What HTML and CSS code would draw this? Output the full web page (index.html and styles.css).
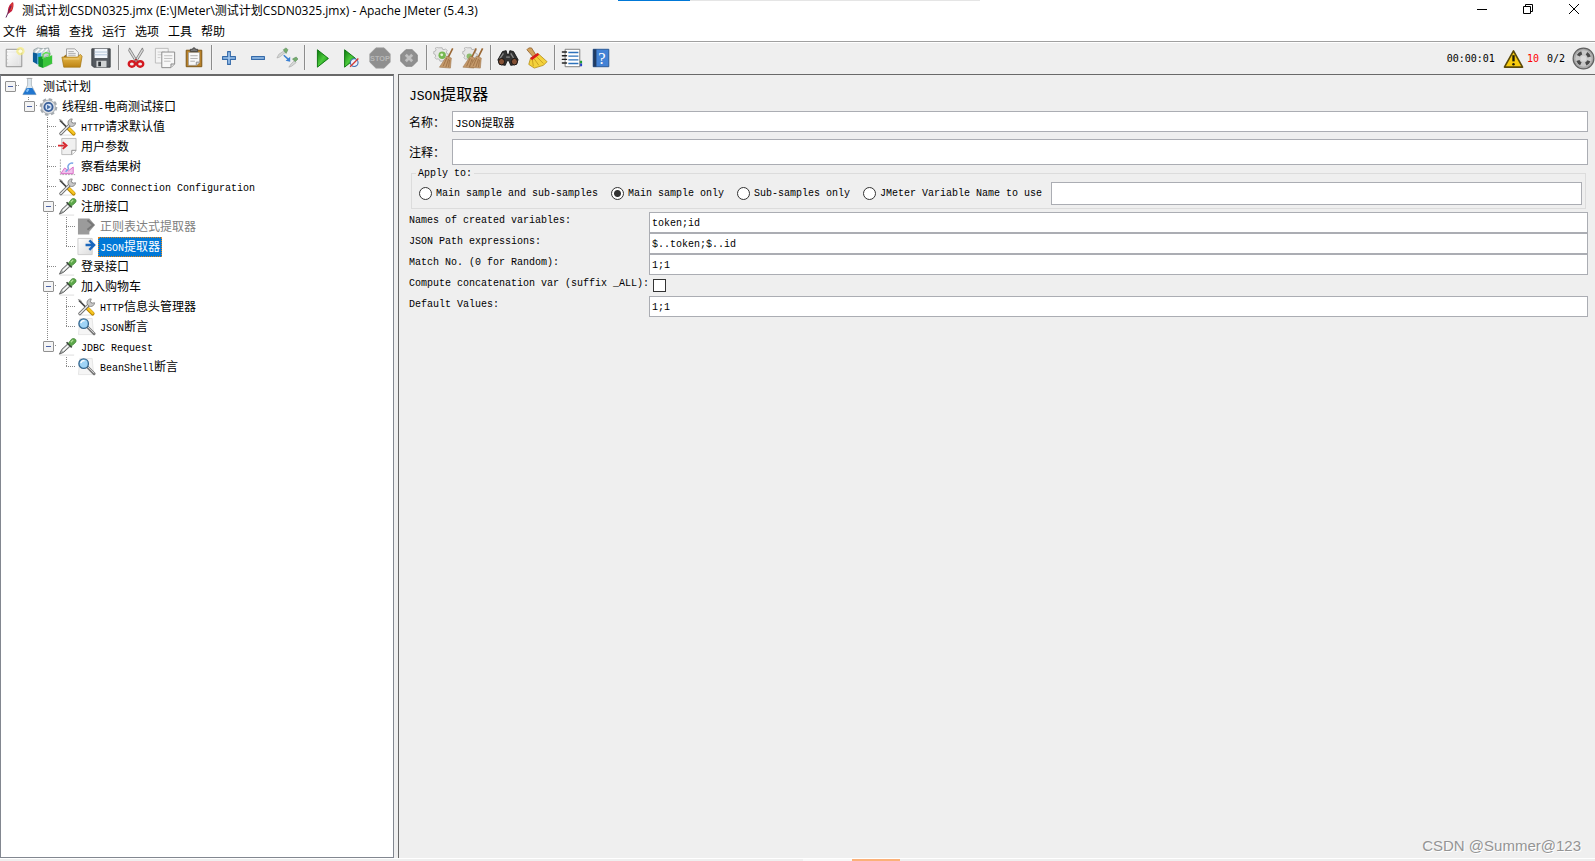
FILE: index.html
```html
<!DOCTYPE html>
<html lang="zh-CN">
<head>
<meta charset="utf-8">
<title>Apache JMeter (5.4.3)</title>
<link rel="stylesheet" href="styles.css">
</head>
<body>
<svg class="defs" aria-hidden="true">
  <defs>
    <linearGradient id="gGreen" x1="0" y1="0" x2="1" y2="1"><stop offset="0" stop-color="#0a7a0a"/><stop offset=".5" stop-color="#4cc93c"/><stop offset="1" stop-color="#0a8a0a"/></linearGradient>
    <linearGradient id="gFolder" x1="0" y1="0" x2="0" y2="1"><stop offset="0" stop-color="#eec356"/><stop offset="1" stop-color="#bd8312"/></linearGradient>
    <linearGradient id="gPaper" x1="0" y1="0" x2="1" y2="1"><stop offset="0" stop-color="#fff"/><stop offset="1" stop-color="#dcdcdc"/></linearGradient>
    <symbol id="tools" viewBox="0 0 20 20">
      <path d="M2 18.500h15" stroke="#ddd"/>
      <path d="M2 3l9 9" stroke="#444" stroke-width="1.600"/><path d="M1 2l3 1 1 2" stroke="#999" fill="none"/>
      <path d="M11.500 12l5 5" stroke="#b98600" stroke-width="4" stroke-linecap="round"/><path d="M11.500 11.500l5 5" stroke="#f7c624" stroke-width="2.500" stroke-linecap="round"/>
      <path d="M3 17L14 6" stroke="#555" stroke-width="3.200" stroke-linecap="round"/><path d="M3 17L14 6" stroke="#ddd" stroke-width="1.800" stroke-linecap="round"/>
      <path d="M15 1.500a4 4 0 1 0 3.500 4l-3 .5-1.500-1.500z" fill="#c9c9c9" stroke="#777" stroke-width=".8"/>
    </symbol>
    <symbol id="dropper" viewBox="0 0 20 20">
      <path d="M2 18.500h15" stroke="#ddd"/>
      <path d="M1.500 17.500L4 12.500l6.500-6 2.500 2.500-7 6.500z" fill="#b5bab8" stroke="#555" stroke-width=".9"/>
      <path d="M5 14l6-5.500" stroke="#fff" stroke-width="1.400"/>
      <path d="M9 5l5.500 5.500" stroke="#3c463c" stroke-width="1.800"/>
      <path d="M11 6l3-4c2-2 5.500-.5 5 2-.2 1.500-3 3.500-5 5z" fill="#5da84a" stroke="#367a2c" stroke-width=".7"/><path d="M13.500 5l2.500-2.500" stroke="#b3e09c" stroke-width="1.300"/>
    </symbol>
    <symbol id="lens" viewBox="0 0 20 20">
      <path d="M3 1h13l1.500 17H1.500z" fill="#f5f5f5" stroke="#ddd" stroke-width=".7"/>
      <path d="M11 10l7 7" stroke="#777" stroke-width="3" stroke-linecap="round"/><path d="M11.500 10l6.500 6.500" stroke="#ddd"/>
      <circle cx="7" cy="6.500" r="5" fill="#9fd4f6" stroke="#35678f" stroke-width="1.400"/><path d="M4 6a3.500 3.500 0 0 1 4-2.500" stroke="#fff" fill="none" stroke-width="1.300"/>
    </symbol>
    <symbol id="broom" viewBox="0 0 24 24">
      <path d="M21.500 1.500l-5 10" stroke="#9a6835" stroke-width="1.800"/>
      <path d="M15 10l5 2L19 23 7 22z" fill="#c59a6b" stroke="#9b7148" stroke-width=".6"/><path d="M15 12l-4 9M17 13l-3 9M18 14l-1 8" stroke="#8d6037" stroke-width=".7"/>
    </symbol>
    <symbol id="gearSmall" viewBox="0 0 24 24">
      <path d="M9 1h3l.5 2 2 .5 2-1 2 2-1 2 .5 2 2 .5v3l-2 .5-1 2 1 2-2 2-2-1-2 1h-3l-.5-2-2-1-2 .5-2-2 1-2-.5-2-2-1v-3l2-.5 1-2-1-2 2-1.500 2 1z" fill="#e6e6e6" stroke="#a9a9a9" stroke-width="1"/>
    </symbol>
  </defs>
</svg>

<div class="window">
  <div class="tabstrip"><span class="tab-active"></span><span class="tab-rest"></span></div>
  <header class="titlebar">
    <svg class="feather" viewBox="0 0 12 18"><path d="M10 1c1 2 .5 6-1 9l-4 3c-1-4 1-10 5-12z" fill="#c9203d"/><path d="M8 2c2 1 1 4 0 7" stroke="#e4572e" fill="none"/><path d="M8 5L3 16.500" stroke="#62265b"/></svg>
    <h1 class="window-title">测试计划CSDN0325.jmx (E:\JMeter\测试计划CSDN0325.jmx) - Apache JMeter (5.4.3)</h1>
    <div class="window-controls">
      <button aria-label="最小化"><svg viewBox="0 0 12 12"><path d="M1 6.500h10"/></svg></button>
      <button aria-label="还原"><svg viewBox="0 0 12 12"><path d="M1.500 3.500h7v7h-7zM3.500 3.500v-2h7v7h-2"/></svg></button>
      <button aria-label="关闭"><svg viewBox="0 0 12 12"><path d="M1 1l10 10M11 1L1 11"/></svg></button>
    </div>
  </header>
  <nav class="menubar">
    <button>文件</button><button>编辑</button><button>查找</button><button>运行</button><button>选项</button><button>工具</button><button>帮助</button>
  </nav>

  <div class="toolbar">
    <button aria-label="新建"><svg viewBox="0 0 24 24"><path d="M3.500 2.500h17v19h-17z" fill="url(#gPaper)" stroke="#8c8c8c"/><path d="M6 5.500h11v13" fill="none" stroke="#e9e9e9"/><path d="M5 5v14" stroke="#c9c9c9" stroke-dasharray="1 3"/><circle cx="19" cy="4.500" r="4.500" fill="#f8ec70" opacity=".65"/><circle cx="19" cy="4.500" r="2" fill="#fffde0"/></svg></button>
    <button aria-label="模板"><svg viewBox="0 0 24 24"><path d="M12 20l8-3 3 1-8 4z" fill="#bbb"/><path d="M2 7V3l4-2 6 1 6-1 2 7-8 4z" fill="#c9d3d6" stroke="#7f8b8f" stroke-width=".7"/><path d="M4 6l4-4M8 7l5-5M13 7l4-5" stroke="#fff" stroke-width="1.500"/><path d="M1 6l5 1v12l-5-3z" fill="#0a5c98"/><path d="M6 7l4-1v12l-4 1z" fill="#2ea1dc"/><path d="M7 11l5-1v13l-5-2z" fill="#139529"/><path d="M12 12l10-3v9l-10 5z" fill="#39c53a"/><path d="M12 13V8l3-2 4 1v4" fill="none" stroke="#5fdc50" stroke-width="1.500"/></svg></button>
    <button aria-label="打开"><svg viewBox="0 0 24 24"><path d="M3 10l3-2h13l2 2v10H3z" fill="#a16f13"/><path d="M6 2h9l4 4v8H6z" fill="#f5f5f5" stroke="#888" stroke-width=".8"/><path d="M8 5h6M8 7h8M8 9h8" stroke="#aaa"/><path d="M1 11h17l3-3 2 2-2 12H3z" fill="url(#gFolder)" stroke="#a67818" stroke-width=".8"/><path d="M3 13h17" stroke="#f4d587"/></svg></button>
    <button aria-label="保存"><svg viewBox="0 0 24 24"><path d="M2 2h20v20H4l-2-2z" fill="#555a60" stroke="#3a3e42"/><path d="M5 2h14v10H5z" fill="#f2f6fb"/><path d="M5 5.500h14M5 8.500h14" stroke="#acbfd4"/><path d="M7 15h11v7H7z" fill="#d0d3d4"/><path d="M9 16h3v5H9z" fill="#30353a"/></svg></button>
    <span class="sep"></span>
    <button aria-label="剪切"><svg viewBox="0 0 24 24"><path d="M5 1l9 15-2 1L4 4zM19 1l-9 15 2 1 8-13z" fill="#dadada" stroke="#777" stroke-width=".9"/><ellipse cx="7.500" cy="18.500" rx="3.400" ry="3" fill="none" stroke="#d31920" stroke-width="2.600"/><ellipse cx="16.500" cy="18.500" rx="3.400" ry="3" fill="none" stroke="#d31920" stroke-width="2.600"/><circle cx="12" cy="14" r="1" fill="#b11"/></svg></button>
    <button aria-label="复制"><svg viewBox="0 0 24 24"><path d="M1.500 1.500h14v16h-14z" fill="#f4f4f4" stroke="#b9b9b9"/><path d="M4 5.500h8M4 8.500h5M4 11.500h3" stroke="#ccc"/><path d="M8.500 5.500h14v13l-4 4h-10z" fill="#f7f7f7" stroke="#858585"/><path d="M11 9.500h9M11 12.500h9M11 15.500h7" stroke="#bbb"/><path d="M18.500 22v-3.500h4" fill="#ddd" stroke="#888"/></svg></button>
    <button aria-label="粘贴"><svg viewBox="0 0 24 24"><path d="M3.500 3.500h17v18h-17z" fill="#b88129" stroke="#76500f"/><path d="M6 6h12v11l-3 3H6z" fill="#f8f8f8" stroke="#999" stroke-width=".7"/><path d="M8 9.500h8M8 12.500h8M8 15.500h5" stroke="#aaa"/><path d="M8 5V2.500h2.500L11 1h2l.5 1.500H16V5z" fill="#777" stroke="#444"/><path d="M14.500 20v-3.500h3.500" fill="#ddd" stroke="#888"/></svg></button>
    <span class="sep"></span>
    <button aria-label="展开"><svg viewBox="0 0 24 24"><path d="M10.500 5h3v5.500H19v3h-5.500V19h-3v-5.500H5v-3h5.500z" fill="#9dc4ed" stroke="#356aa9" stroke-width="1.200" stroke-linejoin="round"/></svg></button>
    <button aria-label="折叠"><svg viewBox="0 0 24 24"><path d="M5 10.500h14v3H5z" fill="#9dc4ed" stroke="#356aa9" stroke-width="1.200" stroke-linejoin="round"/></svg></button>
    <button aria-label="切换"><svg viewBox="0 0 24 24"><g opacity=".75"><path d="M1 12l2-4 6-4 1 2-6 5zM14 22l2-3 4-4 2 2-5 4z" fill="#ccd0ce" stroke="#888" stroke-width=".6"/><path d="M8 3l3-2 2 2-2 4zM18 13l4-2 2 2-3 3z" fill="#4c9841" stroke="#356e35" stroke-width=".7"/></g><path d="M8.500 9l5 4.500" stroke="#3c80d2" stroke-width="1.700"/><path d="M15.500 10.500V16l-5-1z" fill="#3c80d2"/></svg></button>
    <span class="sep"></span>
    <button aria-label="启动"><svg viewBox="0 0 24 24"><path d="M7 3l12 9.500L7 22z" fill="url(#gGreen)" stroke="#08720b"/></svg></button>
    <button aria-label="不停顿开始"><svg viewBox="0 0 24 24"><path d="M5 3l12 9.500L5 22z" fill="url(#gGreen)" stroke="#08720b"/><circle cx="15.500" cy="17" r="4.200" fill="#eef2fb" stroke="#4172b6" stroke-width="1.200"/><path d="M20 12.500l-9 9" stroke="#d33b34" stroke-width="1.500"/></svg></button>
    <button aria-label="停止" disabled><svg viewBox="0 0 24 24"><path d="M7.500 1h9L23 7.500v9L16.500 23h-9L1 16.500v-9z" fill="#858585" stroke="#8f8f8f"/><text class="stop-text" x="12" y="15" text-anchor="middle">STOP</text></svg></button>
    <button aria-label="关闭测试" disabled><svg viewBox="0 0 24 24"><path d="M8.500 3h7L21 8.500v7L15.500 21h-7L3 15.500v-7z" fill="#858585" stroke="#777"/><path d="M8.500 8.500l7 7M15.500 8.500l-7 7" stroke="#bbb" stroke-width="3"/></svg></button>
    <span class="sep"></span>
    <button aria-label="清除"><svg viewBox="0 0 24 24"><use href="#gearSmall" width="20" height="20"/><circle cx="10" cy="9" r="4" fill="#76b852"/><circle cx="9.500" cy="8.500" r="1.500" fill="#e7f4d8"/><use href="#broom" width="24" height="24"/></svg></button>
    <button aria-label="清除全部"><svg viewBox="0 0 24 24"><use href="#gearSmall" width="20" height="20"/><circle cx="8" cy="10" r="3" fill="#8cbc6c"/><use href="#broom" x="-6" width="24" height="24"/><use href="#broom" x="1" width="24" height="24"/></svg></button>
    <span class="sep"></span>
    <button aria-label="查找"><svg viewBox="0 0 24 24"><path d="M6 5l4-1 1 4h2l1-4 4 1 5 9-2 5-6 1-2-5h-2l-2 5-6-1-2-5z" fill="#343434" stroke="#161616"/><path d="M7 7l-4 6M15 7l3 5" stroke="#888" stroke-width="1.500"/><ellipse cx="5" cy="16" rx="3.300" ry="3.500" fill="#855135" stroke="#111"/><ellipse cx="19" cy="16" rx="3.300" ry="3.500" fill="#855135" stroke="#111"/><path d="M10 11h4" stroke="#aaa"/></svg></button>
    <button aria-label="重置查找"><svg viewBox="0 0 24 24"><path d="M1 3l2-2h3l5 8-3 2z" fill="#d2a25d" stroke="#87551b" stroke-width=".8"/><path d="M5 12l8-5 10 9-4 4-10 3-6-4z" fill="#f4d23c" stroke="#ae850a" stroke-width=".8"/><path d="M7 14l1 7M9 13l5 7M12 11l7 7" stroke="#c09619" stroke-width=".9"/><path d="M4.500 12l8-5.500 2 2-8 6z" fill="#d91c1c"/></svg></button>
    <span class="sep"></span>
    <button aria-label="函数助手"><svg viewBox="0 0 24 24"><path d="M19 15h4v3h-4z" fill="#18a22e"/><path d="M19 18h4v3h-4z" fill="#243fce"/><path d="M4.500 2.500h16v19h-16z" fill="#fff" stroke="#777"/><path d="M8 6h11M8 10h11M8 14h11M8 18h11" stroke="#2d72bb" stroke-width="1.500"/><path d="M1.500 5.500H6M1.500 9.500H6M1.500 13.500H6M1.500 17.500H6" stroke="#222" stroke-width="1.500" stroke-linecap="round"/></svg></button>
    <button aria-label="帮助"><svg viewBox="0 0 24 24"><path d="M3.500 2.500h17v19h-17z" fill="#4382d5" stroke="#245391"/><path d="M3.500 2.500H7v19H3.500z" fill="#213c63"/><text class="help-text" x="13" y="18" text-anchor="middle">?</text></svg></button>
    <div class="status">
      <span class="timer">00:00:01</span>
      <button class="warn" aria-label="日志"><svg viewBox="0 0 22 20"><path d="M11 1.500L20.500 18.500h-19z" fill="#f8cb0c" stroke="#5b4a0a" stroke-width="1.700" stroke-linejoin="round"/><path d="M11 6v6.500" stroke="#221d08" stroke-width="2.500"/><circle cx="11" cy="15.500" r="1.300" fill="#221d08"/></svg></button>
      <span class="errors">10</span>
      <span class="threads">0/2</span>
      <svg class="state" viewBox="0 0 24 24"><circle cx="12" cy="12" r="10.800" fill="#aaa" stroke="#606060" stroke-width="1.300"/><circle cx="12" cy="12" r="8.500" fill="#c8c8c8"/><circle cx="12" cy="12" r="6.200" fill="none" stroke="#4a4a4a" stroke-width="3.500" stroke-dasharray="4.600 5.139" transform="rotate(24 12 12)"/><circle cx="12" cy="12" r="3" fill="#dadada"/></svg>
    </div>
  </div>

  <main class="workspace">
    <div class="tree" role="tree">
      <div class="row" role="treeitem"><i class="cell exp"></i><svg class="ico" viewBox="0 0 20 20"><path d="M8 1h4v7l5 10H3l5-10z" fill="#dde7ee" stroke="#a5aeb5" stroke-width=".8"/><path d="M7 11h6l4 7H3z" fill="#2176cf"/><path d="M7 15l2-3" stroke="#86c1f6" stroke-width="2"/><path d="M7 1h6" stroke="#aaa"/></svg><span class="label"><b>测试计划</b></span></div>
      <div class="row" role="treeitem"><i class="cell"></i><i class="cell exp up"></i><svg class="ico" viewBox="0 0 20 20"><circle cx="10" cy="10" r="8" fill="#d2d5d8" stroke="#a5abb0" stroke-width="2.600" stroke-dasharray="3.600 2.683"/><circle cx="10" cy="10" r="7.200" fill="#dfe1e4" stroke="#a5a9ad" stroke-width=".7"/><circle cx="10" cy="10" r="4.300" fill="#d8e4f7" stroke="#395f99" stroke-width="2"/><path d="M8.500 7.500l4 2.500-4 2.500z" fill="#456fa8"/></svg><span class="label"><b>线程组</b>-<b>电商测试接口</b></span></div>
      <div class="row" role="treeitem"><i class="cell"></i><i class="cell"></i><i class="cell up down across"></i><svg class="ico"><use href="#tools"/></svg><span class="label">HTTP<b>请求默认值</b></span></div>
      <div class="row" role="treeitem"><i class="cell"></i><i class="cell"></i><i class="cell up down across"></i><svg class="ico" viewBox="0 0 20 20"><path d="M4 1h15v13l-4 4H4z" fill="#f0f0f0" stroke="#bbb"/><path d="M14.500 18v-4.500H19" fill="#fff" stroke="#888"/><path d="M0 8.500h7M5 5l4 3.500L5 12" fill="none" stroke="#d7282f" stroke-width="2"/></svg><span class="label"><b>用户参数</b></span></div>
      <div class="row" role="treeitem"><i class="cell"></i><i class="cell"></i><i class="cell up down across"></i><svg class="ico" viewBox="0 0 20 20"><path d="M2.500 2v16H18" fill="none" stroke="#aaa" stroke-dasharray="2 1"/><path d="M3 17l4-6 4 3 5-4v7z" fill="#f1c1ec" stroke="#d86bc5"/><path d="M8 15l3-3c-2-4 2-7 5-6" fill="none" stroke="#7ba7e5" stroke-width="1.500"/></svg><span class="label"><b>察看结果树</b></span></div>
      <div class="row" role="treeitem"><i class="cell"></i><i class="cell"></i><i class="cell up down across"></i><svg class="ico"><use href="#tools"/></svg><span class="label">JDBC Connection Configuration</span></div>
      <div class="row" role="treeitem"><i class="cell"></i><i class="cell"></i><i class="cell exp up down"></i><svg class="ico"><use href="#dropper"/></svg><span class="label"><b>注册接口</b></span></div>
      <div class="row off" role="treeitem"><i class="cell"></i><i class="cell"></i><i class="cell up down"></i><i class="cell up down across"></i><svg class="ico" viewBox="0 0 20 20"><path d="M1 1h12l6 7-6 7v3H1z" fill="#9b9b9b"/><path d="M11 3l6 5-6 5" fill="none" stroke="#777" stroke-width="2"/></svg><span class="label"><b>正则表达式提取器</b></span></div>
      <div class="row sel" role="treeitem" aria-selected="true"><i class="cell"></i><i class="cell"></i><i class="cell up down"></i><i class="cell up across"></i><svg class="ico" viewBox="0 0 20 20"><path d="M1 1h15v17H1z" fill="url(#gPaper)" stroke="#ccc"/><path d="M9 8h8M13 3l5 5-5 5" fill="none" stroke="#1b67bd" stroke-width="2.600"/></svg><span class="label">JSON<b>提取器</b></span></div>
      <div class="row" role="treeitem"><i class="cell"></i><i class="cell"></i><i class="cell up down across"></i><svg class="ico"><use href="#dropper"/></svg><span class="label"><b>登录接口</b></span></div>
      <div class="row" role="treeitem"><i class="cell"></i><i class="cell"></i><i class="cell exp up down"></i><svg class="ico"><use href="#dropper"/></svg><span class="label"><b>加入购物车</b></span></div>
      <div class="row" role="treeitem"><i class="cell"></i><i class="cell"></i><i class="cell up down"></i><i class="cell up down across"></i><svg class="ico"><use href="#tools"/></svg><span class="label">HTTP<b>信息头管理器</b></span></div>
      <div class="row" role="treeitem"><i class="cell"></i><i class="cell"></i><i class="cell up down"></i><i class="cell up across"></i><svg class="ico"><use href="#lens"/></svg><span class="label">JSON<b>断言</b></span></div>
      <div class="row" role="treeitem"><i class="cell"></i><i class="cell"></i><i class="cell exp up"></i><svg class="ico"><use href="#dropper"/></svg><span class="label">JDBC Request</span></div>
      <div class="row" role="treeitem"><i class="cell"></i><i class="cell"></i><i class="cell"></i><i class="cell up across"></i><svg class="ico"><use href="#lens"/></svg><span class="label">BeanShell<b>断言</b></span></div>
    </div>

    <form class="panel">
      <h2 class="panel-title">JSON<b>提取器</b></h2>
      <div class="field name"><label for="name"><b>名称：</b></label><input id="name" type="text" value="JSON提取器"></div>
      <div class="field comment"><label for="comment"><b>注释：</b></label><input id="comment" type="text"></div>
      <fieldset class="apply">
        <legend>Apply to:</legend>
        <div class="choices">
          <label><input type="radio" name="scope">Main sample and sub-samples</label>
          <label><input type="radio" name="scope" checked>Main sample only</label>
          <label><input type="radio" name="scope">Sub-samples only</label>
          <label><input type="radio" name="scope">JMeter Variable Name to use</label>
          <input class="varname" type="text" aria-label="JMeter Variable Name">
        </div>
      </fieldset>
      <div class="grid">
        <label for="vars">Names of created variables:</label><input id="vars" type="text" value="token;id">
        <label for="paths">JSON Path expressions:</label><input id="paths" type="text" value="$..token;$..id">
        <label for="match">Match No. (0 for Random):</label><input id="match" type="text" value="1;1">
        <label for="concat">Compute concatenation var (suffix _ALL):</label><input id="concat" type="checkbox">
        <label for="defaults">Default Values:</label><input id="defaults" type="text" value="1;1">
      </div>
      <p class="watermark">CSDN @Summer@123</p>
    </form>
  </main>
  <footer class="bottom"><span class="task-light"></span><span class="task-orange"></span></footer>
</div>
</body>
</html>
```

FILE: styles.css
```css
* { box-sizing: border-box; }

body {
  margin: 0;
  background: #efefef;
  color: #000;
  font: 10px/20px "Liberation Mono", "Noto Sans CJK SC", monospace;
}

button, input { font: inherit; color: inherit; }
button { border: 0; padding: 0; background: none; }
.defs { position: absolute; width: 0; height: 0; }

/* full-width characters are two latin cells wide */
b { font: 12px/12px "Noto Sans CJK SC", sans-serif; }

.window { display: flex; flex-direction: column; height: 100vh; }

.tabstrip { display: flex; height: 1px; padding-left: 618px; background: #fff; }
.tab-active { width: 72px; background: #0078d7; }
.tab-rest { width: 290px; background: #e5e5e5; }

.titlebar { display: flex; background: #fff; height: 20px; }
.feather { width: 12px; height: 18px; margin: 0 7px 0 3px; }
.window-title {
  flex: 1;
  margin: 0;
  font: 12px/20px "Open Sans", "Noto Sans CJK SC", sans-serif;
}
.window-controls { display: flex; gap: 34px; padding: 2px 15px 0 0; }
.window-controls button { width: 12px; height: 12px; display: flex; }
.window-controls svg { width: 12px; height: 12px; fill: none; stroke: #000; stroke-width: 1; }

.menubar { display: flex; gap: 9px; height: 21px; padding-left: 3px; background: #fff; border-bottom: 1px solid #a0a0a0; }
.menubar button { font: 12px/20px "Noto Sans CJK SC", sans-serif; }

.toolbar { display: flex; align-items: center; height: 32px; padding-bottom: 2px; border-top: 1px solid #fff; }
.toolbar > button { width: 29px; height: 29px; padding-right: 1px; display: flex; align-items: center; justify-content: center; flex: none; }
.toolbar > button svg { width: 22px; height: 22px; flex: none; }
.toolbar button:disabled { opacity: 0.9; }
.stop-text { font: bold 8px "Liberation Sans", sans-serif; fill: #b2b2b2; }
.help-text { font: 18px "Liberation Serif", serif; fill: #fff; }
.sep { width: 2px; height: 25px; margin: 0 2px; background: #8c8c8c; border-right: 1px solid #f4f4f4; flex: none; }

.status { display: flex; align-items: center; margin-left: auto; padding-top: 2px; font: 10px/20px "DejaVu Sans Mono", monospace; }
.warn { display: flex; margin: 0 3px 0 8px; }
.warn svg { width: 21px; height: 20px; }
.errors { color: #f00; margin-right: 8px; }
.threads { margin-right: 7px; }
.state { width: 23px; height: 23px; }

.workspace { flex: 1; display: flex; gap: 4px; min-height: 0; }

.tree {
  flex: 0 0 394px;
  padding-top: 1px;
  background: #fff;
  border: 1px solid #828790;
  border-top: 2px solid #696969;
  overflow: hidden;
}
.row { display: flex; height: 20px; }
.cell {
  --v: repeating-linear-gradient(#888 0 1px, transparent 1px 2px);
  --h: repeating-linear-gradient(90deg, #888 0 1px, transparent 1px 2px);
  width: 19px;
  flex: none;
  background-repeat: no-repeat;
}
.up { background-image: var(--v); background-size: 1px 10px; background-position: 8px 0; }
.up.down { background-size: 1px 20px; }
.up.across { background-image: var(--v), var(--h); background-size: 1px 10px, 10px 1px; background-position: 8px 0, 8px 9px; }
.up.down.across { background-size: 1px 20px, 10px 1px; }
.exp { background-image: var(--h); background-size: 10px 1px; background-position: 9px 8px; }
.exp.up { background-image: var(--v), var(--h); background-size: 1px 10px, 10px 1px; background-position: 8px 0, 8px 8px; }
.exp.up.down { background-size: 1px 20px, 10px 1px; }
.exp::before {
  content: "";
  display: block;
  width: 9px;
  height: 9px;
  margin: 4px 0 0 4px;
  border: 1px solid #919191;
  border-radius: 1px;
  background: linear-gradient(#4b63a7, #4b63a7) center / 5px 1px no-repeat #f4f4f4;
}
.ico { width: 19px; height: 20px; flex: none; }
.label { margin-left: 2px; padding: 2px 2px 0; line-height: 20px; height: 20px; white-space: nowrap; }
.off .label { color: #808080; }
.sel .label { background: #0078d7; color: #fff; outline: 1px dotted #e68619; outline-offset: -1px; }

.panel {
  flex: 1;
  min-width: 0;
  position: relative;
  padding: 10px 7px 0 10px;
  border: solid #696969;
  border-width: 1px 0 0 1px;
}
.panel-title { margin: 0 0 2px; font: 13px/24px "Liberation Mono", monospace; }
.panel-title b { font-size: 16px; line-height: 16px; }
input[type="text"] {
  height: 21px;
  min-width: 0;
  padding: 2px 2px 0;
  border: 1px solid #abadb3;
  background: #fff;
  border-radius: 0;
  outline: 0;
}
.field { display: flex; align-items: center; }
.field label { width: 43px; display: flex; }
.field input[type="text"] { flex: 1; }
.name { margin-bottom: 7px; }
.name input[type="text"] { padding-top: 0; font: 11px "Liberation Mono", "Noto Sans CJK SC", monospace; }
.comment input[type="text"] { height: 26px; }

.apply { margin: 0 2px 3px; padding: 0 3px 3px 4px; border: 1px solid #dcdcdc; min-width: 0; }
.apply legend { padding: 0 2px; line-height: 17px; }
.choices { display: flex; align-items: center; gap: 13px; padding-left: 3px; }
.choices label { display: flex; align-items: center; gap: 4px; white-space: nowrap; }
.choices .varname[type="text"] { flex: 1; height: 23px; margin-left: -4px; }
input[type="radio"], input[type="checkbox"] { appearance: none; width: 13px; height: 13px; margin: 0; border: 1px solid #333; background: #fff; }
input[type="radio"] { border-radius: 50%; }
input[type="radio"]:checked { background: radial-gradient(#333 0 3px, #fff 4px); }

.grid { display: grid; grid-template-columns: 240px 1fr; grid-auto-rows: 21px; }
.grid label { line-height: 18px; white-space: nowrap; }
.grid input[type="checkbox"] { margin: 4px 0 0 4px; }

.watermark {
  position: absolute;
  right: 14px;
  bottom: 2px;
  margin: 0;
  color: #949494;
  font: 15px/20px "Liberation Sans", sans-serif;
  text-shadow: 1px 1px 0 #fff;
}

.bottom { display: flex; height: 3px; border-top: 1px solid #fff; padding-left: 803px; flex: none; }
.task-light { width: 49px; background: #f8f8f8; }
.task-orange { width: 48px; background: #fbb179; }
```
